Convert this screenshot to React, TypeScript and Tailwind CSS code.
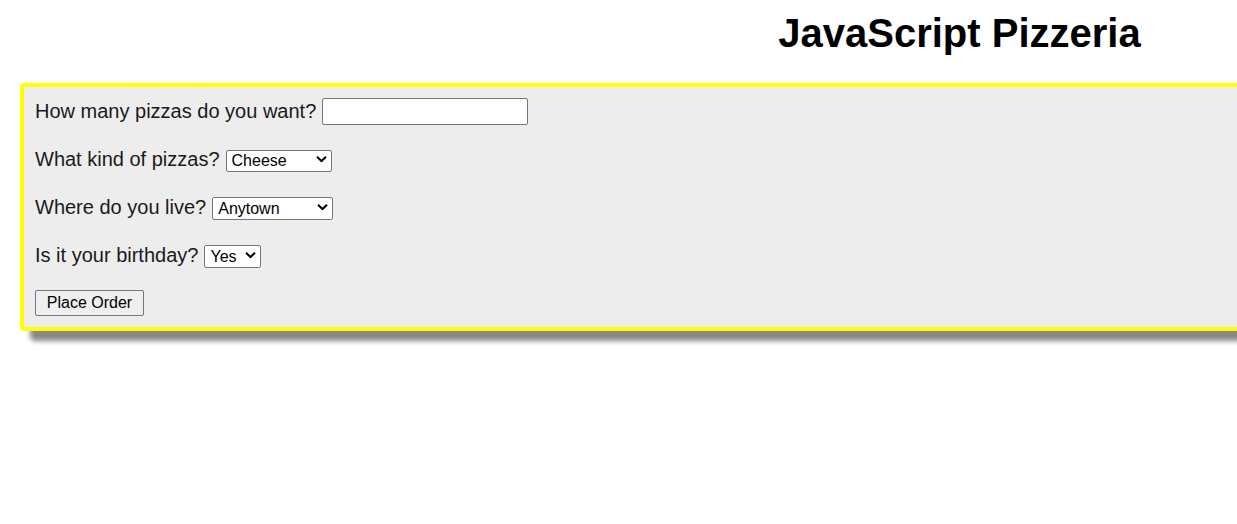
import type { ReactNode } from "react";

function Select({ width, height, children }: { width: string; height: string; children: ReactNode }) {
  return (
    <div className={`relative ${width} ${height}`}>
      <select className="h-full w-full appearance-none rounded-[2px] border border-[#767676] bg-white pl-[5px] pr-[18px] text-[16px] leading-[18px] text-black outline-none">
        {children}
      </select>
      <svg
        className="pointer-events-none absolute right-[5px] top-1/2 -translate-y-1/2"
        width="11"
        height="7"
        viewBox="0 0 11 7"
        fill="none"
      >
        <path d="M1 1.2 L5.5 5.5 L10 1.2" stroke="#000" strokeWidth="2" />
      </svg>
    </div>
  );
}

export default function App() {
  return (
    <div className="w-full overflow-hidden bg-white min-h-screen" style={{ fontFamily: '"Liberation Sans", Arial, sans-serif' }}>
      <div className="w-[1919px]">
        <h1 className="mt-[10px] mb-[27px] text-center text-[40px] leading-[46px] font-bold text-black">
          JavaScript Pizzeria
        </h1>
        <form
          className="mx-[20px] rounded-[5px] border-4 border-[#ffff00] bg-[#ededed] px-[11px] py-[10px] shadow-[10px_10px_5px_#888888] text-[20px] leading-[23px] text-[#1a1a1a]"
          onSubmit={(e) => e.preventDefault()}
        >
          <div className="flex flex-col gap-[20px]">
            <div className="flex h-[28px] items-center gap-[6px]">
              <label>How many pizzas do you want?</label>
              <input
                type="text"
                className="h-[27px] w-[206px] rounded-[2px] border border-[#767676] bg-white px-1 text-[16px] outline-none"
              />
            </div>
            <div className="flex h-[28px] items-center gap-[6px]">
              <label>What kind of pizzas?</label>
              <Select width="w-[106px]" height="h-[22px]">
                <option>Cheese</option>
                <option>Pepperoni</option>
                <option>Veggie</option>
              </Select>
            </div>
            <div className="flex h-[28px] items-center gap-[6px]">
              <label>Where do you live?</label>
              <Select width="w-[121px]" height="h-[23px]">
                <option>Anytown</option>
                <option>Springfield</option>
                <option>Riverside</option>
              </Select>
            </div>
            <div className="flex h-[28px] items-center gap-[6px]">
              <label>Is it your birthday?</label>
              <Select width="w-[57px]" height="h-[23px]">
                <option>Yes</option>
                <option>No</option>
              </Select>
            </div>
            <div className="flex h-[28px] items-center">
              <button
                type="submit"
                className="h-[26px] w-[109px] rounded-[2px] border border-[#767676] bg-[#efefef] text-[16px] leading-[18px] text-black"
              >
                Place Order
              </button>
            </div>
          </div>
        </form>
      </div>
    </div>
  );
}
